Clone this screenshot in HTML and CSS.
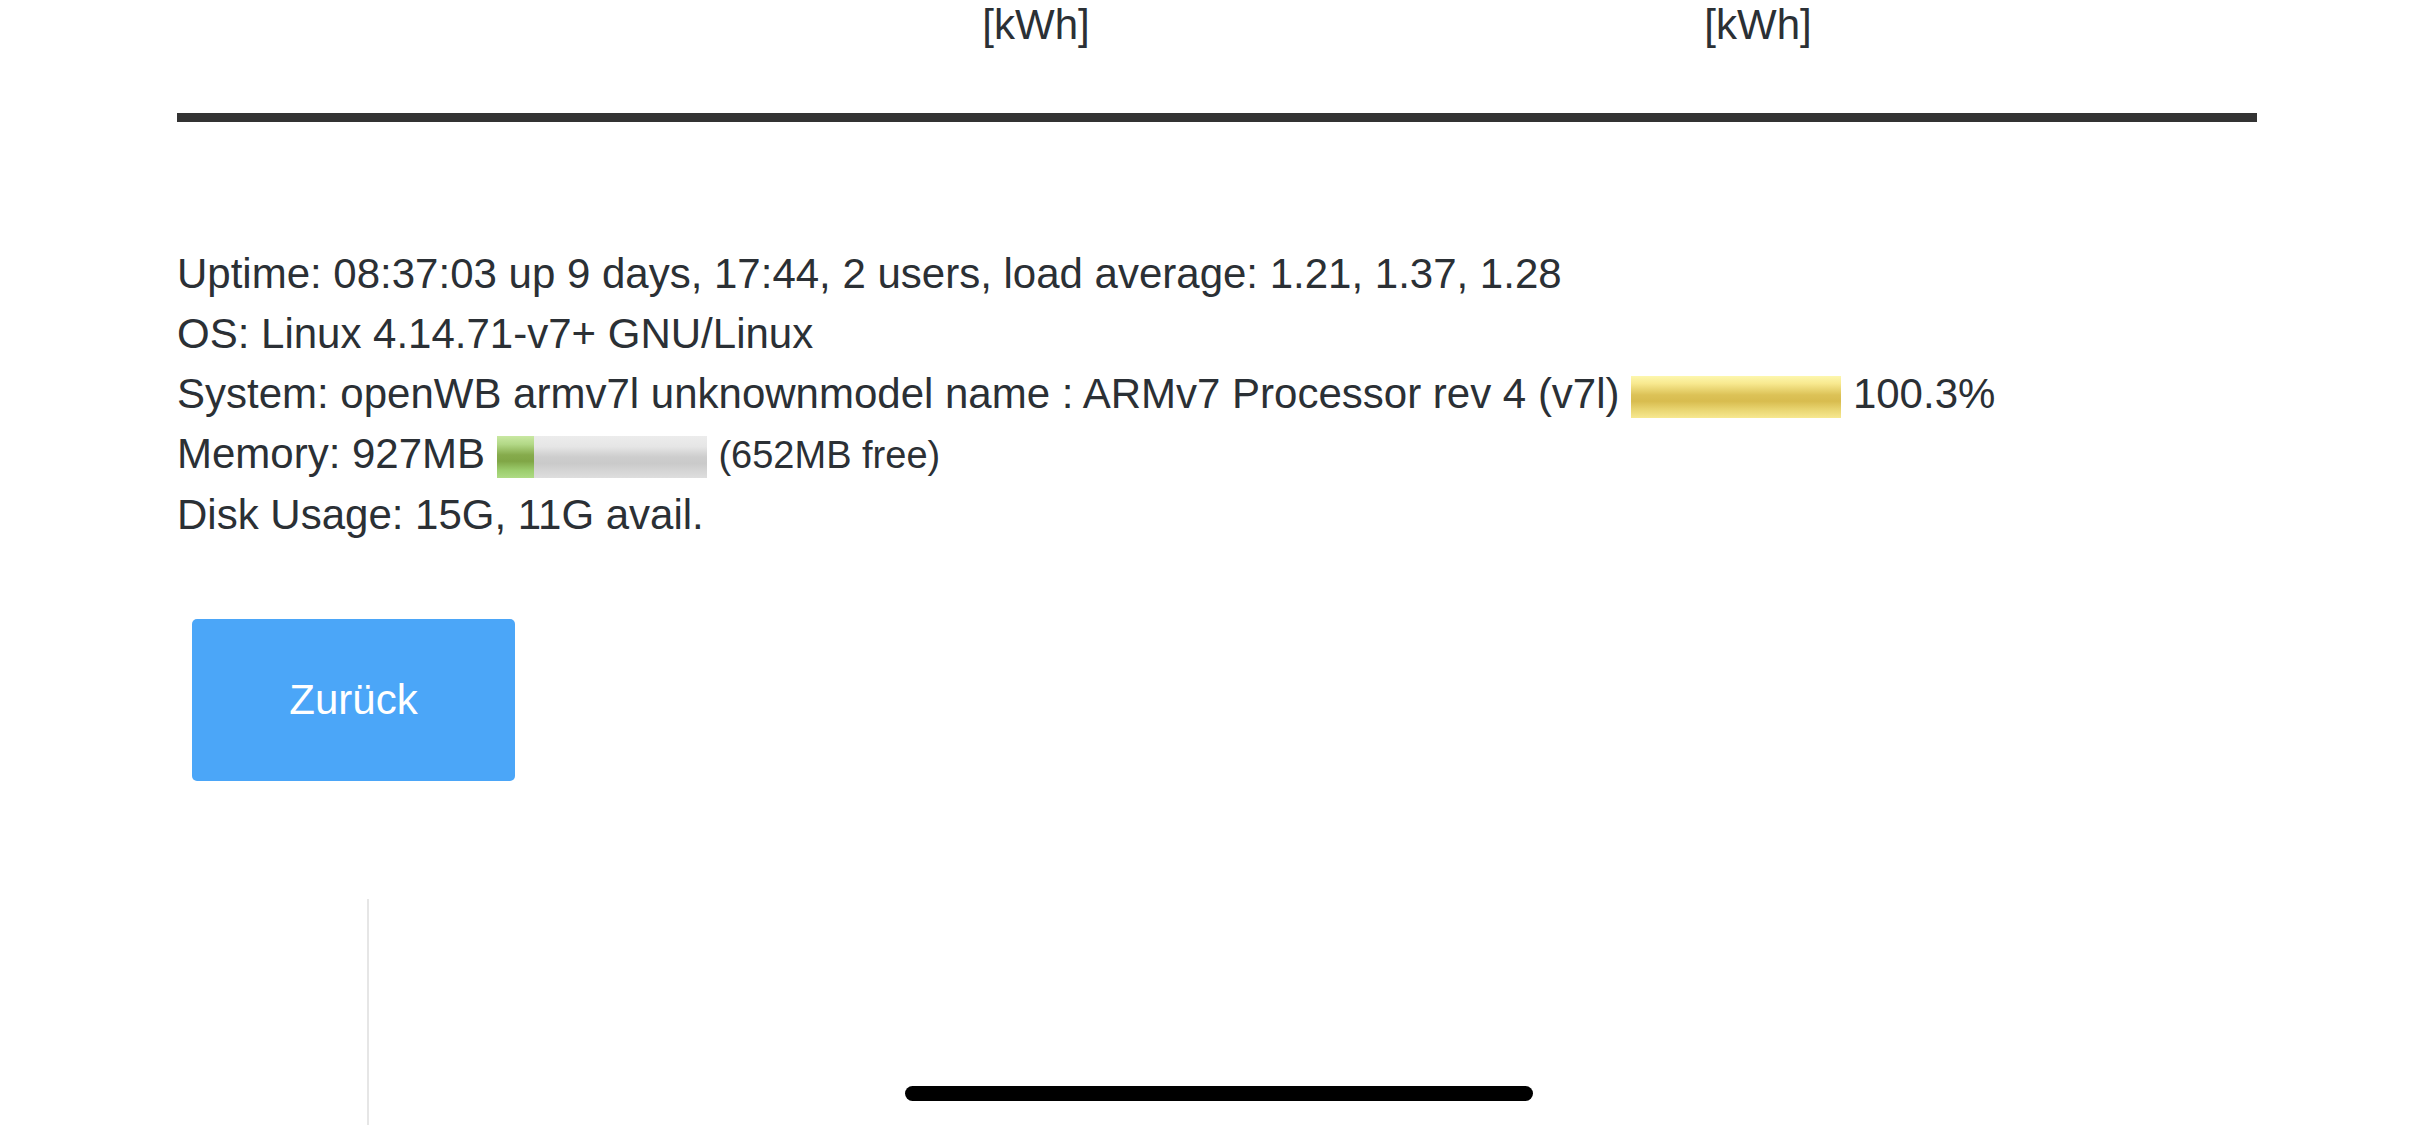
FILE: index.html
```html
<!DOCTYPE html>
<html lang="de">
<head>
<meta charset="utf-8">
<title>openWB System</title>
<link rel="stylesheet" href="styles.css">
</head>
<body>
<div class="container">
  <div class="thead">
    <div class="th"></div>
    <div class="th">[kWh]</div>
    <div class="th">[kWh]</div>
  </div>
  <div class="info">
    <div class="line">Uptime: 08:37:03 up 9 days, 17:44, 2 users, load average: 1.21, 1.37, 1.28</div>
    <div class="line">OS: Linux 4.14.71-v7+ GNU/Linux</div>
    <div class="line">System: openWB armv7l unknownmodel name : ARMv7 Processor rev 4 (v7l) <span class="bar bar-cpu"></span> 100.3%</div>
    <div class="line">Memory: 927MB <span class="bar bar-mem"><span class="bar-used" style="width:17.6%"></span></span> <span class="memnote">(652MB free)</span></div>
    <div class="line">Disk Usage: 15G, 11G avail.</div>
  </div>
  <button class="btn-back" type="button">Zurück</button>
  <div class="divider"></div>
</div>
<div class="home-indicator"></div>
</body>
</html>
```
FILE: styles.css
```css
html, body {
  margin: 0;
  padding: 0;
  background: #ffffff;
  height: 1125px;
  overflow: hidden;
}
body {
  font-family: "Liberation Sans", Helvetica, Arial, sans-serif;
  font-size: 42px;
  color: #2b3035;
}
.container {
  width: 2080px;
  margin: 0 0 0 177px;
}
.thead {
  display: grid;
  grid-template-columns: 636px 446px 1fr;
  line-height: 50px;
  text-align: center;
  padding-bottom: 63px;
  border-bottom: 9px solid #333333;
}
.info {
  margin-top: 122px;
  line-height: 60px;
}
.bar {
  display: inline-block;
  width: 210px;
  height: 42px;
  vertical-align: middle;
  position: relative;
  overflow: hidden;
}
.bar-cpu {
  background: linear-gradient(to bottom, #fdf7ae 0%, #f8e98f 18%, #dcc257 45%, #d8bc4f 60%, #ead774 82%, #f7e890 100%);
}
.bar-mem {
  background: linear-gradient(to bottom, #ececec 0%, #e6e6e6 25%, #cdcdcd 50%, #cacaca 65%, #d6d6d6 85%, #dedede 100%);
}
.bar-used {
  display: block;
  height: 100%;
  background: linear-gradient(to bottom, #c9e8a2 0%, #b2d886 20%, #86ab4c 45%, #80a646 60%, #9ccd6d 82%, #aedb84 100%);
}
.memnote {
  font-size: 38px;
}
.btn-back {
  display: block;
  margin: 74px 0 0 15px;
  width: 323px;
  height: 162px;
  border: 0;
  border-radius: 5px;
  background: #4ba6f8;
  color: #ffffff;
  font-family: "Liberation Sans", Helvetica, Arial, sans-serif;
  font-size: 42px;
  padding: 0;
}
.divider {
  margin: 118px 0 0 190px;
  width: 0;
  height: 226px;
  border-left: 2px solid #e6e6e6;
}
.home-indicator {
  position: fixed;
  left: 905px;
  top: 1086px;
  width: 628px;
  height: 15px;
  border-radius: 8px;
  background: #000000;
}
```
